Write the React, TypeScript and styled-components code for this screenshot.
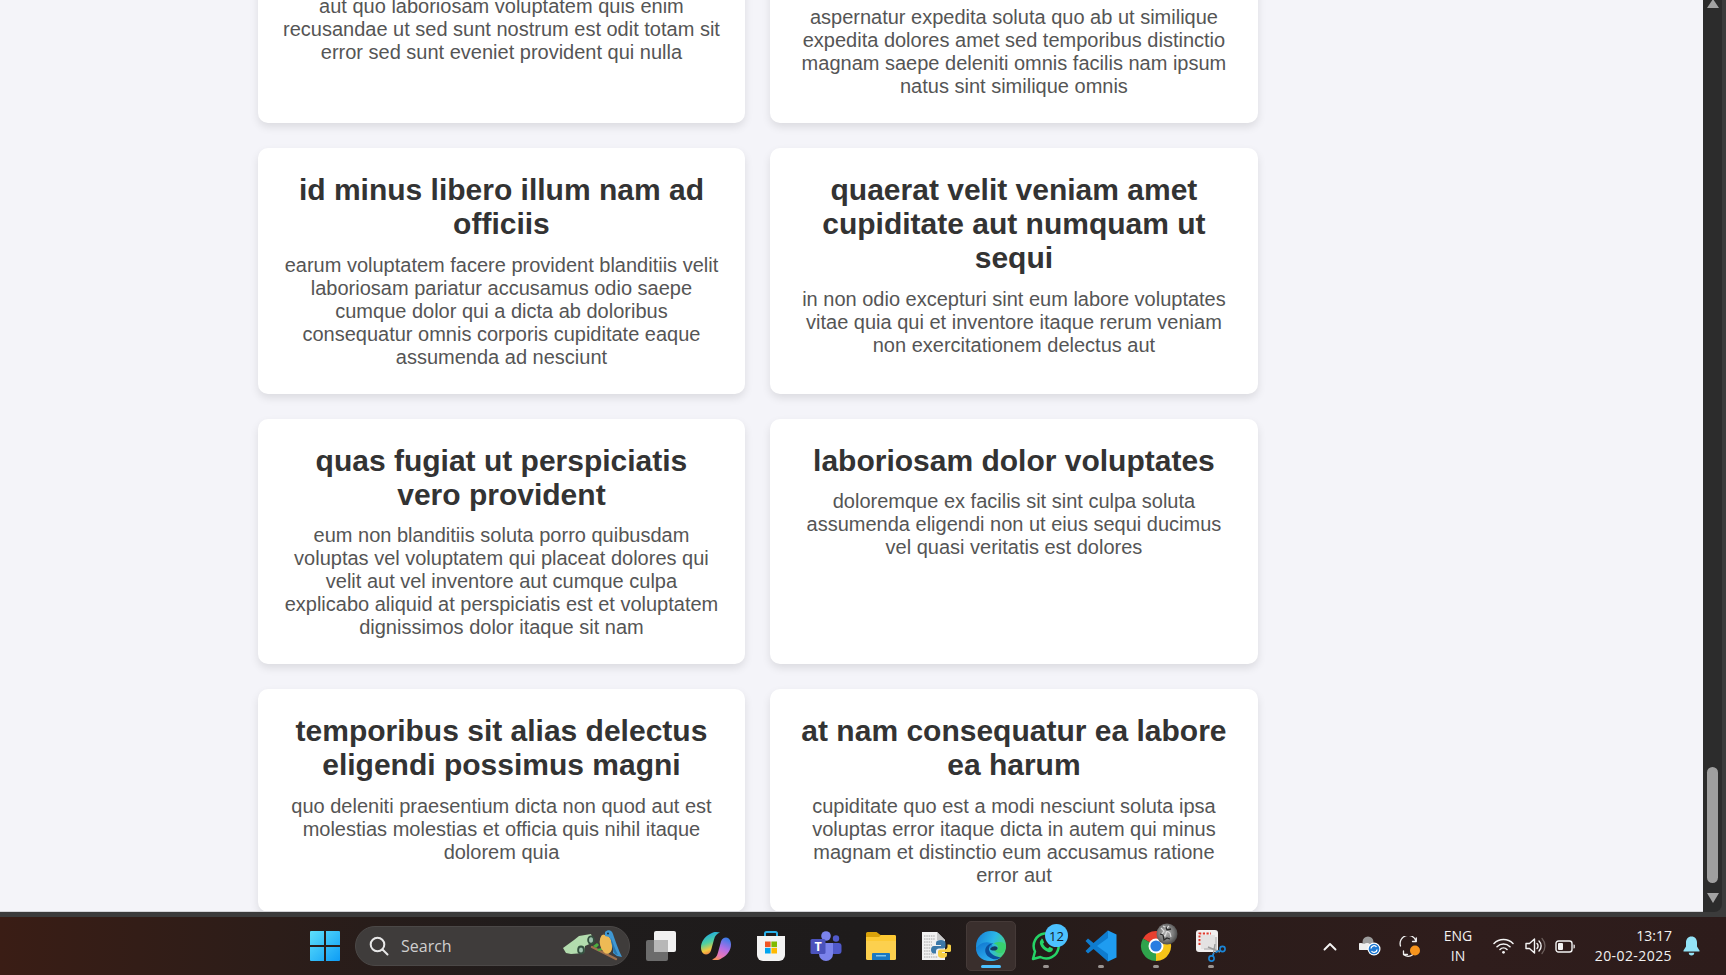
import React from "react";
import styled, { createGlobalStyle } from "styled-components";

const Global = createGlobalStyle`
  html, body { margin: 0; padding: 0; height: 975px; overflow: hidden; background: #3a3a3a; }
  #root { height: 975px; }
`;

const Page = styled.div`
  height: 975px;
  display: flex;
  flex-direction: column;
  background: #3b3b3b;
`;
const Browser = styled.div`
  height: 912px;
  display: flex;
  padding-right: 4px;
  flex: none;
`;
const Content = styled.main`
  flex: 1;
  min-width: 0;
  background: #f4f4f9;
  overflow: hidden;
  display: flex;
  flex-direction: column;
  justify-content: flex-end;
  padding-left: 257.7px;
  position: relative;
  &::after {
    content: "";
    position: absolute;
    left: 0;
    right: 0;
    bottom: 0;
    height: 1px;
    background: #d4d4d8;
  }
`;
const Grid = styled.div`
  width: 1000px;
  display: grid;
  grid-template-columns: 1fr 1fr;
  gap: 25px;
  flex: none;
`;
const Card = styled.article`
  background: #fff;
  border-radius: 10px;
  box-shadow: 0 4px 8px rgba(0, 0, 0, 0.1);
  padding: 25px;
  text-align: center;
  font-family: "Liberation Sans", Arial, sans-serif;
`;
const Title = styled.h2`
  margin: 0 0 12.6px;
  font-size: 30px;
  line-height: 34px;
  font-weight: 700;
  color: #333;
`;
const Body = styled.p`
  margin: 0;
  font-size: 20px;
  line-height: 23px;
  color: #555;
`;
const Scrollbar = styled.div`
  width: 19px;
  flex: none;
  background: #2c2c2c;
  border-bottom-right-radius: 8px;
  display: flex;
  flex-direction: column;
  justify-content: space-between;
  align-items: center;
  padding-bottom: 9px;
  box-sizing: border-box;
`;
const ArrowUp = styled.div`
  width: 0;
  height: 0;
  border-left: 6.5px solid transparent;
  border-right: 6.5px solid transparent;
  border-bottom: 9px solid #a3a3a3;
  margin-top: -1px;
`;
const ScrollEnd = styled.div`
  display: flex;
  flex-direction: column;
  align-items: center;
  gap: 10px;
`;
const Thumb = styled.div`
  width: 11px;
  height: 116px;
  border-radius: 6px;
  background: #9f9f9f;
`;
const ArrowDown = styled.div`
  width: 0;
  height: 0;
  border-left: 6.5px solid transparent;
  border-right: 6.5px solid transparent;
  border-top: 10px solid #a3a3a3;
`;
const Taskbar = styled.footer`
  margin-top: 5px;
  height: 58px;
  flex: none;
  display: flex;
  align-items: center;
  padding: 0 16px 0 310px;
  box-sizing: border-box;
  background: linear-gradient(90deg, #3a1d15 0%, #2c1d19 16%, #1f1c1c 32%, #1e1b1b 50%, #2a1c1a 66%, #2f1d1c 85%, #2d1c1b 100%);
  color: #fff;
  font-family: "Open Sans", "Noto Sans", sans-serif;
`;
const StartIcon = styled.div`
  width: 30px;
  height: 30px;
  flex: none;
  display: flex;
`;
const SearchBox = styled.div`
  margin-left: 15px;
  width: 275px;
  height: 40px;
  flex: none;
  box-sizing: border-box;
  border-radius: 20px;
  background: #3f3c3b;
  border: 1px solid #4b4847;
  display: flex;
  align-items: center;
  padding-left: 13px;
  gap: 12px;
  position: relative;
  font-size: 16px;
  color: #cfcfcf;
`;
const SearchArt = styled.div`
  position: absolute;
  right: 6px;
  top: 1px;
  width: 62px;
  height: 36px;
`;
const Apps = styled.div`
  margin-left: 6px;
  display: flex;
  gap: 5px;
`;
const AppSlot = styled.div<{ $active?: boolean }>`
  width: 50px;
  height: 50px;
  position: relative;
  display: flex;
  align-items: center;
  justify-content: center;
  box-sizing: border-box;
  border-radius: 5px;
  background: ${(p) => (p.$active ? "#3a2f2d" : "transparent")};
  border: 1px solid ${(p) => (p.$active ? "#453a38" : "transparent")};
`;
const Running = styled.span<{ $active?: boolean }>`
  position: absolute;
  left: 50%;
  bottom: 2px;
  transform: translateX(-50%);
  height: 3px;
  width: ${(p) => (p.$active ? "20px" : "6px")};
  border-radius: 2px;
  background: ${(p) => (p.$active ? "#4cc2ff" : "#9a9491")};
`;
const Badge = styled.span`
  position: absolute;
  left: 23px;
  top: 2px;
  width: 23px;
  height: 23px;
  border-radius: 50%;
  background: #4cc2ff;
  color: #14202a;
  font-size: 13px;
  display: flex;
  align-items: center;
  justify-content: center;
`;
const Tray = styled.div`
  margin-left: auto;
  display: flex;
  align-items: center;
`;
const TraySlot = styled.div<{ $w: number }>`
  width: ${(p) => p.$w}px;
  display: flex;
  align-items: center;
  justify-content: center;
  flex: none;
`;
const Lang = styled.div`
  width: 56px;
  text-align: center;
  font-size: 14px;
  line-height: 20px;
  color: #f2f2f2;
`;
const Clock = styled.div`
  width: 92px;
  text-align: right;
  font-size: 14px;
  line-height: 20px;
  color: #f2f2f2;
`;
const DateLine = styled.span`
  letter-spacing: 0.42px;
`;

type P = { posts: [string, string][] };
const posts: [string, string][] = [
  ["beatae soluta recusandae", "dolorem quibusdam ducimus consequuntur dicta aut quo laboriosam voluptatem quis enim recusandae ut sed sunt nostrum est odit totam sit error sed sunt eveniet provident qui nulla"],
  ["qui qui voluptates illo iste minima", "aspernatur expedita soluta quo ab ut similique expedita dolores amet sed temporibus distinctio magnam saepe deleniti omnis facilis nam ipsum natus sint similique omnis"],
  ["id minus libero illum nam ad officiis", "earum voluptatem facere provident blanditiis velit laboriosam pariatur accusamus odio saepe cumque dolor qui a dicta ab doloribus consequatur omnis corporis cupiditate eaque assumenda ad nesciunt"],
  ["quaerat velit veniam amet cupiditate aut numquam ut sequi", "in non odio excepturi sint eum labore voluptates vitae quia qui et inventore itaque rerum veniam non exercitationem delectus aut"],
  ["quas fugiat ut perspiciatis vero provident", "eum non blanditiis soluta porro quibusdam voluptas vel voluptatem qui placeat dolores qui velit aut vel inventore aut cumque culpa explicabo aliquid at perspiciatis est et voluptatem dignissimos dolor itaque sit nam"],
  ["laboriosam dolor voluptates", "doloremque ex facilis sit sint culpa soluta assumenda eligendi non ut eius sequi ducimus vel quasi veritatis est dolores"],
  ["temporibus sit alias delectus eligendi possimus magni", "quo deleniti praesentium dicta non quod aut est molestias molestias et officia quis nihil itaque dolorem quia"],
  ["at nam consequatur ea labore ea harum", "cupiditate quo est a modi nesciunt soluta ipsa voluptas error itaque dicta in autem qui minus magnam et distinctio eum accusamus ratione error aut"],
];

const Posts = ({ posts }: P) => (
  <Grid>
    {posts.map(([t, b]) => (
      <Card key={t}>
        <Title>{t}</Title>
        <Body>{b}</Body>
      </Card>
    ))}
  </Grid>
);

const WinLogo = () => (
  <svg width="30" height="30" viewBox="0 0 30 30">
    <defs>
      <linearGradient id="win" x1="0" y1="0" x2="1" y2="1">
        <stop offset="0" stopColor="#5ee0fb" />
        <stop offset="1" stopColor="#0d9cf5" />
      </linearGradient>
    </defs>
    <path fill="url(#win)" d="M1 0h13v14H0V1a1 1 0 0 1 1-1zM16 0h13a1 1 0 0 1 1 1v13H16zM0 16h14v14H1a1 1 0 0 1-1-1zM16 16h14v13a1 1 0 0 1-1 1H16z" />
  </svg>
);
const SearchGlyph = () => (
  <svg width="20" height="20" viewBox="0 0 20 20" fill="none" stroke="#e8e8e8" strokeWidth="2" strokeLinecap="round">
    <circle cx="8.5" cy="8.5" r="6.8" />
    <path d="M13.5 13.5l5 5" />
  </svg>
);
const BirdArt = () => (
  <svg width="62" height="36" viewBox="0 0 62 36">
    <path d="M2 20 L13 12 L18 8 L30 6 L33 14 L24 18 L23 25 L10 26 L5 25z" fill="#b3dcae" />
    <ellipse cx="30" cy="12" rx="3.800" ry="4.600" fill="#34503f" />
    <ellipse cx="30" cy="12" rx="2" ry="2.800" fill="#9cc0ac" />
    <ellipse cx="20" cy="22" rx="3.800" ry="4.400" fill="#34503f" />
    <ellipse cx="20" cy="22" rx="2" ry="2.600" fill="#9cc0ac" />
    <path d="M31 19 L55 31" stroke="#a0704c" strokeWidth="2.400" strokeLinecap="round" />
    <path d="M32 18l4-3 2 2-3 3z M36 21l5-1 0 2-4 1z" fill="#4cae3f" />
    <ellipse cx="45" cy="16" rx="6" ry="10" fill="#eeba55" transform="rotate(-14 45 16)" />
    <path d="M44 4c3-3 7-2 8 2 2 6 5 15 9 23l-5-1-4-3c1-6-1-12-4-16l-4-1z" fill="#3f97d2" />
    <path d="M50 10c2 5 4 11 7 17l-3-1c-2-4-4-10-4-16z" fill="#2a76ab" />
    <circle cx="47" cy="5.500" r="1" fill="#152a3a" />
    <path d="M44 5l-3 1 3 1z" fill="#4a4a4a" />
  </svg>
);
const TaskView = () => (
  <svg width="30" height="30" viewBox="0 0 30 30">
    <rect x="0" y="9" width="22" height="21" rx="2" fill="#6c6c6c" />
    <rect x="8" y="0" width="22" height="21" rx="2" fill="#f1f1f1" />
    <rect x="8" y="9" width="14" height="12" fill="#b7b7b7" />
  </svg>
);
const Copilot = () => (
  <svg width="30" height="30" viewBox="0 0 30 30">
    <defs>
      <linearGradient id="cpA" x1="0.3" y1="0" x2="0.6" y2="1">
        <stop offset="0" stopColor="#1aa5e8" />
        <stop offset="0.45" stopColor="#4fd0a0" />
        <stop offset="0.75" stopColor="#f3c93d" />
        <stop offset="1" stopColor="#f06c4a" />
      </linearGradient>
      <linearGradient id="cpB" x1="0.7" y1="0" x2="0.3" y2="1">
        <stop offset="0" stopColor="#3a7ce8" />
        <stop offset="0.45" stopColor="#b26fe6" />
        <stop offset="0.8" stopColor="#e878b6" />
        <stop offset="1" stopColor="#f6935c" />
      </linearGradient>
    </defs>
    <path d="M9 3c3-2.500 7-2.500 10-1.500-3 1-5 3-6 7l-3 11c-.7 2.800-3 4-5 4-3 0-5-3-5-7 0-6 4-11 9-13.500z" fill="url(#cpA)" />
    <path d="M21 27c-3 2.500-7 2.500-10 1.500 3-1 5-3 6-7l3-11c.7-2.800 3-4 5-4 3 0 5 3 5 7 0 6-4 11-9 13.500z" fill="url(#cpB)" />
  </svg>
);
const Store = () => (
  <svg width="30" height="30" viewBox="0 0 30 30">
    <path d="M9 5V2.500A1.500 1.500 0 0 1 10.500 1h9A1.500 1.500 0 0 1 21 2.500V5" fill="none" stroke="#28b0ea" strokeWidth="2" />
    <path d="M1 5h28v19a6 6 0 0 1-6 6H7a6 6 0 0 1-6-6z" fill="#f3f3f3" />
    <rect x="9" y="10.500" width="5.600" height="5.600" fill="#f05423" />
    <rect x="15.400" y="10.500" width="5.600" height="5.600" fill="#7fba00" />
    <rect x="9" y="16.900" width="5.600" height="5.600" fill="#00a4ef" />
    <rect x="15.400" y="16.900" width="5.600" height="5.600" fill="#ffb900" />
  </svg>
);
const Teams = () => (
  <svg width="32" height="30" viewBox="0 0 32 30">
    <circle cx="16" cy="5" r="4.800" fill="#7b83eb" />
    <circle cx="26" cy="7.500" r="3.200" fill="#5059c9" />
    <rect x="21" y="12" width="10.500" height="11" rx="3" fill="#5059c9" />
    <path d="M9 12h14v11a7 7 0 0 1-14 0z" fill="#7b83eb" />
    <rect x="0.500" y="8" width="15" height="15" rx="1.600" fill="#4b53bc" />
    <text x="8" y="20" textAnchor="middle" fontSize="12.500" fontWeight="700" fill="#fff" fontFamily="Open Sans, sans-serif">T</text>
  </svg>
);
const Folder = () => (
  <svg width="30" height="30" viewBox="0 0 30 30">
    <path d="M0 2.500A1.500 1.500 0 0 1 1.500 1h9l4 3h14A1.500 1.500 0 0 1 30 5.500V10H0z" fill="#d9a20b" />
    <path d="M0 6h30v21.500a1.500 1.500 0 0 1-1.500 1.500h-27A1.500 1.500 0 0 1 0 27.500z" fill="#fcd04e" />
    <path d="M0 6h13l2-2h13.500A1.500 1.500 0 0 1 30 5.500V10H0z" fill="#fcc934" />
    <path d="M6 29v-6a1 1 0 0 1 1-1h16a1 1 0 0 1 1 1v6z" fill="#1a78c2" />
    <rect x="10" y="24" width="10" height="1.500" fill="#7ec4ef" />
  </svg>
);
const PyFile = () => (
  <svg width="30" height="30" viewBox="0 0 30 30">
    <path d="M1 1h15l8 8v20H1z" fill="#f1f1f1" />
    <path d="M16 1v8h8z" fill="#c9c9c9" />
    <path d="M3 5h11M3 8h11M3 11h8M3 14h8M3 17h7M3 20h7M3 23h10M3 26h14" stroke="#a4a4a4" strokeWidth="1" strokeDasharray="1.500 .8" />
    <path d="M20 9c-3 0-5 .8-5 3v2h5v1h-7c-2 0-3 1.600-3 3.800 0 2.200 1 3.700 3 3.700h2v-2.300c0-1.600 1.200-2.700 3-2.700h4c1.600 0 2.500-1 2.500-2.400V12c0-2.200-2-3-4.500-3z" fill="#3b78a8" />
    <path d="M21 27c3 0 5-.8 5-3v-2h-5v-1h7c2 0 2.500-1.600 2.500-3.800 0-2.200-.5-3.700-2.500-3.700h-1.500v2.300c0 1.600-1.200 2.700-3 2.700h-4c-1.600 0-2.500 1-2.500 2.400V24c0 2.200 2 3 4 3z" fill="#f6cf45" />
  </svg>
);
const Edge = () => (
  <svg width="30" height="30" viewBox="0 0 30 30">
    <defs>
      <linearGradient id="edA" x1="0" y1="0.3" x2="1" y2="0.7">
        <stop offset="0" stopColor="#1a86d8" />
        <stop offset="0.5" stopColor="#2bb6e8" />
        <stop offset="1" stopColor="#4bd870" />
      </linearGradient>
      <linearGradient id="edB" x1="0" y1="0" x2="0.6" y2="1">
        <stop offset="0" stopColor="#0e74cf" />
        <stop offset="1" stopColor="#2fb0ef" />
      </linearGradient>
    </defs>
    <circle cx="15" cy="15" r="15" fill="url(#edA)" />
    <path d="M15 12c-6-2.500-13 1-15 6 .5 6 5 12 14 12 5 0 8-1 10.500-3.500-3 1-7 .5-9.500-1.500-4-3-3-9 2-9z" fill="url(#edB)" />
    <path d="M13 26c-4.500-2.500-5-8.500-1.500-11.500 2-1.600 4-2.200 6-1.800C14.500 13 12 16 13.500 20c1.500 3.500 6 5.500 11 6.500-3 2.500-7.500 2.500-11.500-.5z" fill="#0b4f9c" />
    <path d="M17.500 12.500c3 .5 5 2.500 4.500 4.500-.5 1.500-2 2.500-4 2.500 2 2 5 3 8 2.500 3-2 4-5.500 4-7-1-3-5-6-12.500-2.500z" fill="#38d06f" />
    <path d="M14 18c1.500-2.500 5-3.500 7-2 1.500 1.500 0 3.500-3 3.500-2 0-3.500-.5-4-1.500z" fill="#123a63" />
  </svg>
);
const WhatsApp = () => (
  <svg width="30" height="30" viewBox="0 0 30 30" fill="none">
    <path d="M2 28l2-7.500A12.500 12.500 0 1 1 9.400 26z" stroke="#25d366" strokeWidth="2.500" strokeLinejoin="round" />
    <path d="M10.500 8.500c-1.500 1-2 2.500-1.500 4.500 1 3.500 4 6.500 8 8 2 .5 3.500 0 4.500-1.500.5-1 .5-1.800 0-2.200l-3-1.500-1.500 1.700c-2-.7-4-2.600-5-4.700l1.200-1.400-1.500-3.300c-.5-.5-1.500-.5-1.700 0z" fill="#25d366" />
  </svg>
);
const VSCode = () => (
  <svg width="32" height="32" viewBox="0 0 32 32">
    <path d="M23 0.500l8.500 4v23l-8.500 4L9 17.500V14.500z" fill="#1f9cf0" />
    <path d="M23 8L12 16l11 8v7.500L8.500 19 3 23.500 0.500 21l5-5-5-5L3 8.500 8.500 13 23 0.500z" fill="#0e7ccf" />
  </svg>
);
const Chrome = () => (
  <svg width="30" height="30" viewBox="0 0 30 30" style={{ overflow: "visible" }}>
    <defs>
      <radialGradient id="av" cx="0.45" cy="0.45" r="0.6">
        <stop offset="0" stopColor="#b5b5b5" />
        <stop offset="0.6" stopColor="#7a7a7a" />
        <stop offset="1" stopColor="#414141" />
      </radialGradient>
    </defs>
    <path d="M15 15L2 7.500A15 15 0 0 1 28 7.500z" fill="#e8402f" />
    <path d="M15 15L28 7.500A15 15 0 0 1 15 30z" fill="#f5c518" />
    <path d="M15 15L15 30A15 15 0 0 1 2 7.500z" fill="#2fa34c" />
    <circle cx="15" cy="15" r="7.500" fill="#fff" />
    <circle cx="15" cy="15" r="5.600" fill="#2a7de1" />
    <circle cx="26" cy="3" r="10.500" fill="url(#av)" />
    <path d="M20 -3l3 3-2 3 3 2 2-5 3 2 1 4M22 -5l4 2 2-2" stroke="#dcdcdc" strokeWidth="1.200" fill="none" />
    <path d="M19 3l3 1 1 5 3-2 3 1M25 -4l1 3 4 -1" stroke="#2a2a2a" strokeWidth="1.300" fill="none" />
  </svg>
);
const Snip = () => (
  <svg width="30" height="32" viewBox="0 0 30 32">
    <rect x="0" y="0" width="22" height="22" rx="3" fill="#f1efef" />
    <path d="M3.500 15V3.500H15" fill="none" stroke="#e0392c" strokeWidth="2" strokeDasharray="2.200 1.500" />
    <rect x="5" y="5" width="14" height="14" fill="#e4e2e2" />
    <path d="M8 19h12v-12" fill="none" stroke="#bdbdbd" strokeWidth="1.500" />
    <path d="M12 17l12 5M19 14l-2 12" stroke="#9a9a9a" strokeWidth="1.400" />
    <circle cx="26.500" cy="19" r="2.600" fill="none" stroke="#1a86d8" strokeWidth="1.600" />
    <circle cx="15.500" cy="28.500" r="2.600" fill="none" stroke="#1a86d8" strokeWidth="1.600" />
    <path d="M23.500 20.500l-4 2M16.500 26l1.500-3" stroke="#1a86d8" strokeWidth="1.600" />
  </svg>
);
const Chevron = () => (
  <svg width="14" height="9" viewBox="0 0 14 9" fill="none" stroke="#f4f4f4" strokeWidth="1.900" strokeLinecap="round" strokeLinejoin="round">
    <path d="M1.500 7.500L7 2l5.500 5.500" />
  </svg>
);
const CloudSync = () => (
  <svg width="22" height="20" viewBox="0 0 22 20">
    <circle cx="9" cy="6" r="5.500" fill="#9c9c9c" />
    <path d="M1.500 14a3.500 3.500 0 0 1 .5-7c1 0 2 .3 3 1 1-.8 2-1 3-1 3 0 5 2 5 7z" fill="#efefef" />
    <circle cx="15" cy="13" r="6.500" fill="#fff" />
    <circle cx="15" cy="13" r="5.300" fill="#1e78d2" />
    <path d="M12 12.500a3 3 0 0 1 5.500-1.500M18 13.500a3 3 0 0 1-5.500 1.500" fill="none" stroke="#fff" strokeWidth="1.300" />
  </svg>
);
const SyncDot = () => (
  <svg width="22" height="21" viewBox="0 0 22 21" fill="none" stroke="#f1f1f1" strokeWidth="1.300" strokeLinecap="round" strokeLinejoin="round">
    <path d="M1.500 10A8 8 0 0 1 17 5M13.500 5.500H17.300V1.800" />
    <path d="M14 18.500a8 8 0 0 1-9 .5M8.500 18.500H4.500V15" />
    <circle cx="16" cy="14.500" r="5" fill="#f7941d" stroke="none" />
  </svg>
);
const Wifi = () => (
  <svg width="21" height="16" viewBox="0 0 21 16" fill="none" stroke="#f4f4f4" strokeWidth="1.500" strokeLinecap="round">
    <path d="M1 5.500a13.500 13.500 0 0 1 19 0M4 8.700a9.300 9.300 0 0 1 13 0M7 11.500a5 5 0 0 1 7 0" />
    <circle cx="10.500" cy="14.300" r="1.400" fill="#f4f4f4" stroke="none" />
  </svg>
);
const Volume = () => (
  <svg width="21" height="18" viewBox="0 0 21 18" fill="none" strokeLinejoin="round" strokeLinecap="round">
    <path d="M1 6.500v5h3.500L9.500 16V2L4.500 6.500z" stroke="#f4f4f4" strokeWidth="1.400" />
    <path d="M12 6.500a3.500 3.500 0 0 1 0 5M14 4a7 7 0 0 1 0 10" stroke="#f4f4f4" strokeWidth="1.400" />
    <path d="M17 1.500a11 11 0 0 1 0 15" stroke="#6c5f5c" strokeWidth="1.300" />
  </svg>
);
const Battery = () => (
  <svg width="20" height="13" viewBox="0 0 20 13">
    <rect x="1" y="1" width="16" height="11" rx="2.500" fill="none" stroke="#f4f4f4" strokeWidth="1.400" />
    <rect x="3" y="3" width="5" height="7" rx="1" fill="#f4f4f4" />
    <path d="M18.500 4.500h.3a1 1 0 0 1 1 1v2a1 1 0 0 1-1 1h-.3z" fill="#f4f4f4" />
  </svg>
);
const Bell = () => (
  <svg width="17" height="20" viewBox="0 0 17 20">
    <path d="M8.500 0.500c3.500 0 5.500 2.700 5.500 6v4l2.500 4v1H0.500v-1l2.500-4v-4c0-3.300 2-6 5.500-6z" fill="#93e3f7" />
    <path d="M5.800 16.800h5.400a2.700 2.700 0 0 1-5.400 0z" fill="#93e3f7" />
  </svg>
);

export default function App() {
  return (
    <Page>
      <Global />
      <Browser>
        <Content>
          <Posts posts={posts} />
        </Content>
        <Scrollbar>
          <ArrowUp />
          <ScrollEnd>
            <Thumb />
            <ArrowDown />
          </ScrollEnd>
        </Scrollbar>
      </Browser>
      <Taskbar>
        <StartIcon>
          <WinLogo />
        </StartIcon>
        <SearchBox>
          <SearchGlyph />
          <span>Search</span>
          <SearchArt>
            <BirdArt />
          </SearchArt>
        </SearchBox>
        <Apps>
          <AppSlot><TaskView /></AppSlot>
          <AppSlot><Copilot /></AppSlot>
          <AppSlot><Store /></AppSlot>
          <AppSlot><Teams /></AppSlot>
          <AppSlot><Folder /></AppSlot>
          <AppSlot><PyFile /></AppSlot>
          <AppSlot $active><Edge /><Running $active /></AppSlot>
          <AppSlot><WhatsApp /><Badge>12</Badge><Running /></AppSlot>
          <AppSlot><VSCode /><Running /></AppSlot>
          <AppSlot><Chrome /><Running /></AppSlot>
          <AppSlot><Snip /><Running /></AppSlot>
        </Apps>
        <Tray>
          <TraySlot $w={40}><Chevron /></TraySlot>
          <TraySlot $w={40}><CloudSync /></TraySlot>
          <TraySlot $w={40}><SyncDot /></TraySlot>
          <Lang>ENG<br />IN</Lang>
          <TraySlot $w={34}><Wifi /></TraySlot>
          <TraySlot $w={30}><Volume /></TraySlot>
          <TraySlot $w={30}><Battery /></TraySlot>
          <Clock>13:17<br /><DateLine>20-02-2025</DateLine></Clock>
          <TraySlot $w={38}><Bell /></TraySlot>
        </Tray>
      </Taskbar>
    </Page>
  );
}
